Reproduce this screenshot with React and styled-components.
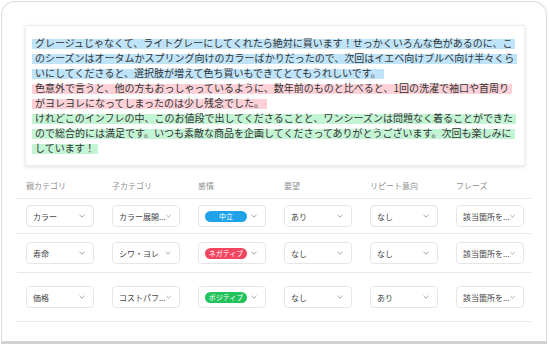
import React from "react";
import styled, { createGlobalStyle } from "styled-components";

const Global = createGlobalStyle`
  html, body { margin: 0; padding: 0; background: #ffffff; }
  body {
    width: 550px; height: 344px; overflow: hidden;
    font-family: "Noto Sans CJK JP", "Noto Sans", sans-serif;
    color: #333;
  }
`;

const Frame = styled.div`
  box-sizing: border-box;
  margin: 1px 0 0 1px;
  width: 546px;
  height: 343px;
  border: 1px solid #dcdcdc;
  border-bottom: 3px solid #d2d2d2;
  border-radius: 14px 14px 0 0;
  padding: 23px 0 0 0;
  display: flex;
  flex-direction: column;
`;

const Card = styled.div`
  box-sizing: border-box;
  margin-left: 23px;
  width: 500px;
  border: 1px solid #eeeeee;
  box-shadow: 0 1px 4px rgba(0, 0, 0, 0.12);
  padding: 9px 4px 10px 6px;
`;

const Para = styled.p`
  margin: 0;
  font-size: 10px;
  line-height: 15px;
  color: #333;
`;

const tones = {
  blue: "#bfe4fa",
  pink: "#fcd1d8",
  green: "#c3f4d4",
};

const Mark = styled.span`
  padding: 0 3px;
  background-image: linear-gradient(${(p) => tones[p.$tone]}, ${(p) => tones[p.$tone]});
  background-size: 100% 10px;
  background-position: 0 4px;
  background-repeat: no-repeat;
  -webkit-box-decoration-break: clone;
  box-decoration-break: clone;
`;

const Table = styled.div`
  margin: 14px 0 0 15px;
  width: 515px;
`;

const Row = styled.div`
  display: grid;
  grid-template-columns: repeat(5, 86px) 68px;
  padding: ${(p) => p.$pad} 0 ${(p) => p.$pad} 9px;
  border-bottom: 1px solid #e8e8e8;
`;

const HeadRow = styled(Row)`
  padding: 0 0 6px 9px;
`;

const HeadCell = styled.div`
  font-size: 8px;
  line-height: 12px;
  color: #8f8f8f;
`;

const Select = styled.div`
  box-sizing: border-box;
  width: 68px;
  height: 22px;
  border: 1px solid #e6e6e6;
  border-radius: 4px;
  display: flex;
  align-items: center;
  justify-content: space-between;
  padding: 0 8px 0 6px;
  font-size: 8px;
  color: #444;
  white-space: nowrap;
`;

const badgeColors = {
  neutral: "#1fa2e8",
  negative: "#f2455f",
  positive: "#22c35c",
};

const Badge = styled.span`
  display: inline-flex;
  align-items: center;
  justify-content: center;
  width: 42px;
  height: 11px;
  border-radius: 6px;
  background: ${(p) => badgeColors[p.$kind]};
  color: #fff;
  font-size: 7px;
  line-height: 11px;
`;

const Chevron = () => (
  <svg width="6" height="4" viewBox="0 0 6 4" fill="none">
    <path d="M0.5 0.8 L3 3.2 L5.5 0.8" stroke="#9a9a9a" strokeWidth="0.9" />
  </svg>
);

const Dropdown = ({ children }) => (
  <Select>
    {children}
    <Chevron />
  </Select>
);

const headers = ["親カテゴリ", "子カテゴリ", "感情", "要望", "リピート意向", "フレーズ"];

const rows = [
  { pad: "6px", a: "カラー", b: "カラー展開...", s: ["neutral", "中立"], d: "あり", e: "なし", f: "該当箇所を..." },
  { pad: "8px", a: "寿命", b: "シワ・ヨレ", s: ["negative", "ネガティブ"], d: "なし", e: "なし", f: "該当箇所を..." },
  { pad: "13px", a: "価格", b: "コストパフ...", s: ["positive", "ポジティブ"], d: "なし", e: "あり", f: "該当箇所を..." },
];

const comments = [
  {
    tone: "blue",
    lines: [
      "グレージュじゃなくて、ライトグレーにしてくれたら絶対に買います！せっかくいろんな色があるのに、こ",
      "のシーズンはオータムかスプリング向けのカラーばかりだったので、次回はイエベ向けブルベ向け半々くら",
      "いにしてくださると、選択肢が増えて色ち買いもできてとてもうれしいです。",
    ],
  },
  {
    tone: "pink",
    lines: [
      "色意外で言うと、他の方もおっしゃっているように、数年前のものと比べると、1回の洗濯で袖口や首周り",
      "がヨレヨレになってしまったのは少し残念でした。",
    ],
  },
  {
    tone: "green",
    lines: [
      "けれどこのインフレの中、このお値段で出してくださることと、ワンシーズンは問題なく着ることができた",
      "ので総合的には満足です。いつも素敵な商品を企画してくださってありがとうございます。次回も楽しみに",
      "しています！",
    ],
  },
];

export default function App() {
  return (
    <>
      <Global />
      <Frame>
        <Card>
          {comments.map((c) => (
            <Para key={c.tone}>
              <Mark $tone={c.tone}>
                {c.lines.map((l, i) => (
                  <React.Fragment key={i}>
                    {i > 0 && <br />}
                    {l}
                  </React.Fragment>
                ))}
              </Mark>
            </Para>
          ))}
        </Card>
        <Table>
          <HeadRow>
            {headers.map((h) => (
              <HeadCell key={h}>{h}</HeadCell>
            ))}
          </HeadRow>
          {rows.map((r, i) => (
            <Row key={i} $pad={r.pad}>
              <Dropdown>{r.a}</Dropdown>
              <Dropdown>{r.b}</Dropdown>
              <Dropdown>
                <Badge $kind={r.s[0]}>{r.s[1]}</Badge>
              </Dropdown>
              <Dropdown>{r.d}</Dropdown>
              <Dropdown>{r.e}</Dropdown>
              <Dropdown>{r.f}</Dropdown>
            </Row>
          ))}
        </Table>
      </Frame>
    </>
  );
}
